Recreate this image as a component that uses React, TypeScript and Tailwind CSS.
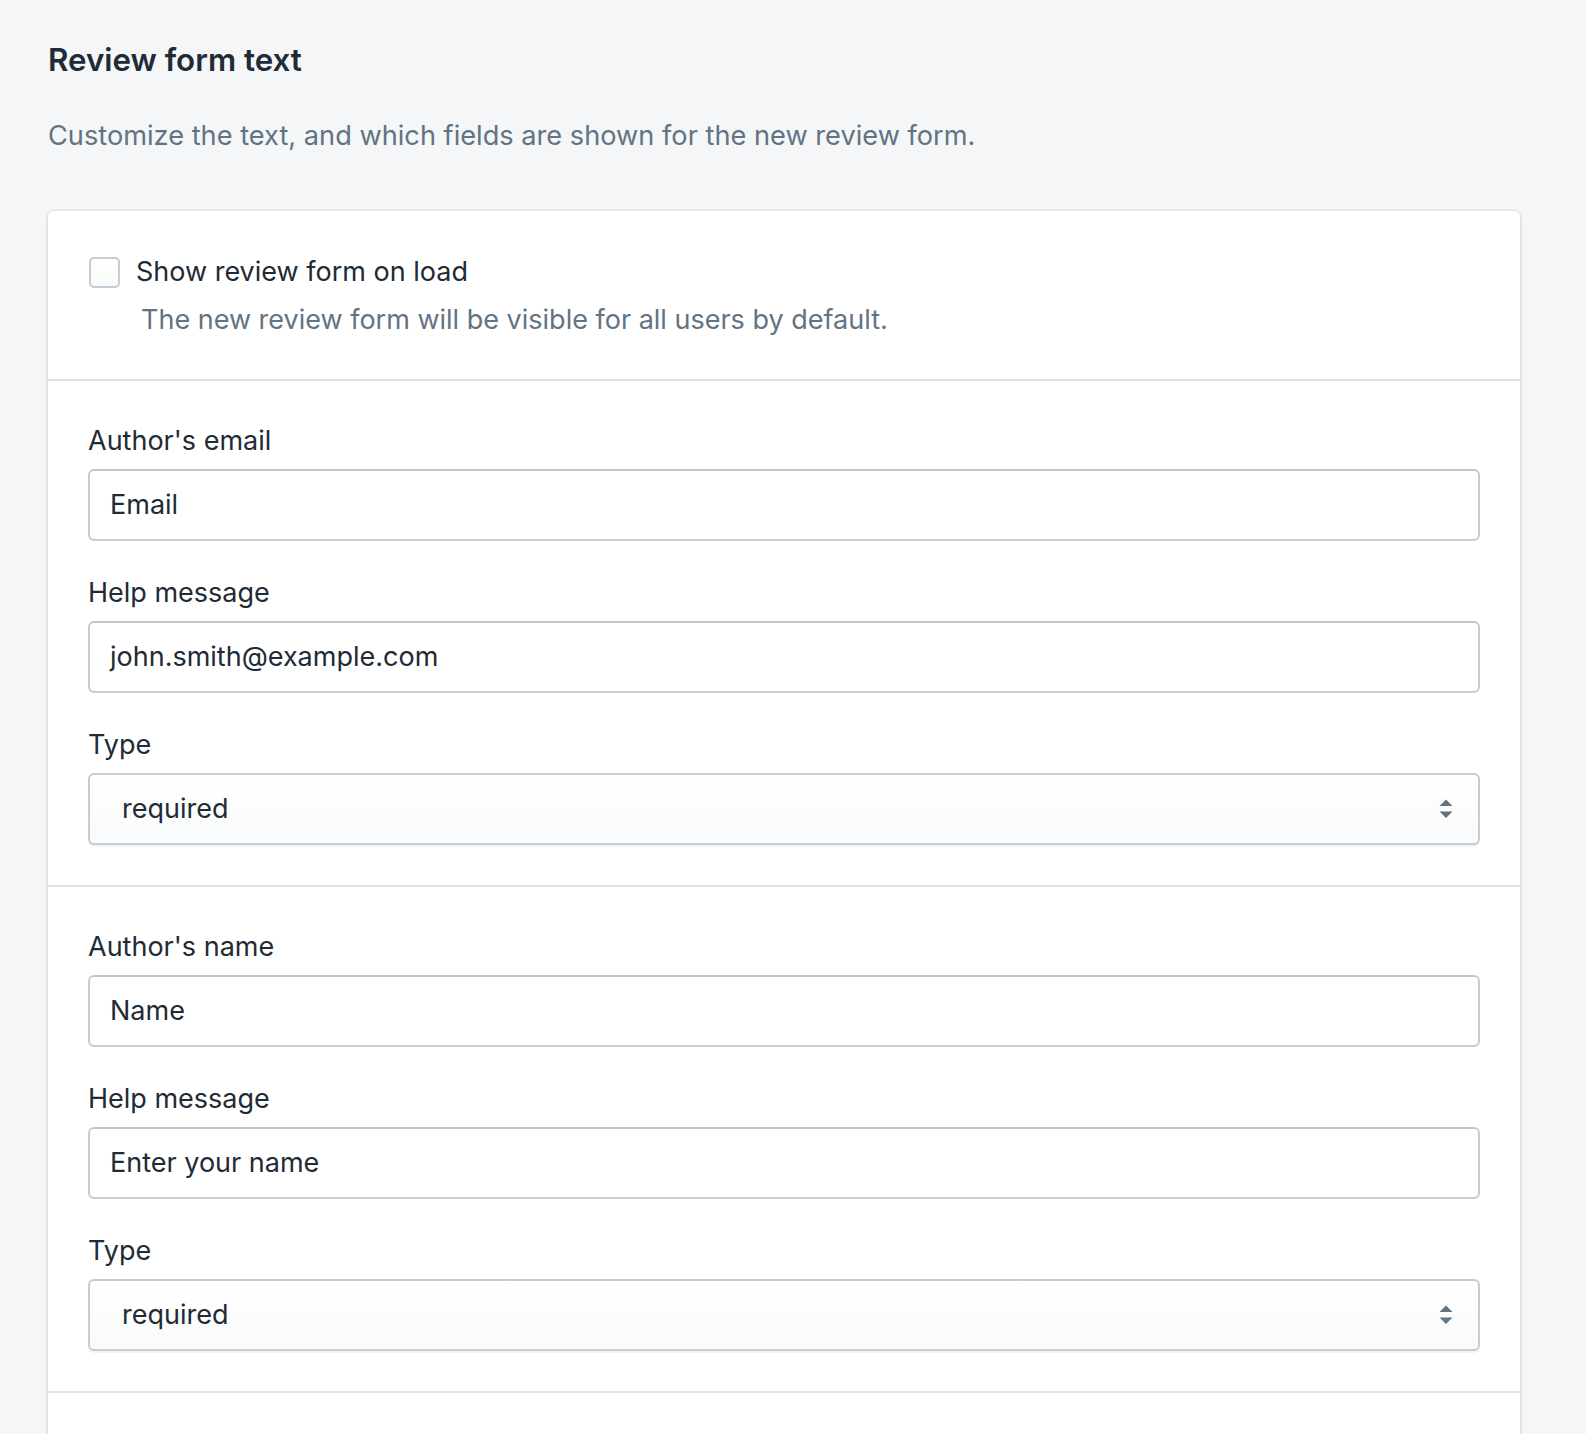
import React from 'react';

interface Field {
  label: string;
  value: string;
}

interface Section {
  id: string;
  fields: Field[];
  type: string;
}

const sections: Section[] = [
  {
    id: 'email',
    fields: [
      { label: "Author's email", value: 'Email' },
      { label: 'Help message', value: 'john.smith@example.com' },
    ],
    type: 'required',
  },
  {
    id: 'name',
    fields: [
      { label: "Author's name", value: 'Name' },
      { label: 'Help message', value: 'Enter your name' },
    ],
    type: 'required',
  },
];

const SelectArrows: React.FC = () => (
  <svg width="14" height="20" viewBox="0 0 14 20" className="text-[#637381]" fill="currentColor">
    <path d="M7 0.5L13.5 7H0.5z" />
    <path d="M0.5 12.5H13.5L7 19z" />
  </svg>
);

const TextInput: React.FC<Field> = ({ label, value }) => (
  <div>
    <label className="block text-[27px] leading-[40px] text-[#212b36]">{label}</label>
    <div className="mt-2 h-[72px] rounded-[6px] border-2 border-[#c4cdd5] border-t-[#bfc6cd] bg-white px-5 flex items-center text-[27px] text-[#212b36]">
      {value}
    </div>
  </div>
);

const TypeSelect: React.FC<{ value: string }> = ({ value }) => (
  <div>
    <label className="block text-[27px] leading-[40px] text-[#212b36]">Type</label>
    <div className="mt-2 h-[72px] rounded-[6px] border-2 border-[#c4cdd5] bg-gradient-to-b from-white to-[#f9fafb] shadow-[0_2px_0_0_rgba(22,29,37,0.05)] pl-8 pr-[25px] flex items-center justify-between text-[27px] text-[#212b36]">
      <span>{value}</span>
      <SelectArrows />
    </div>
  </div>
);

export default function App() {
  return (
    <div className="h-screen overflow-hidden bg-[#f4f6f8] pl-12 pr-[66px] pt-10 font-['Inter','Noto_Sans',sans-serif] antialiased">
      <h2 className="text-[31.3px] leading-[40px] font-semibold text-[#212b36]">Review form text</h2>
      <p className="mt-9 text-[27.2px] leading-[40px] text-[#637381]">
        Customize the text, and which fields are shown for the new review form.
      </p>

      <div className="mt-[55px] rounded-[6px] bg-white shadow-[0_0_0_2px_rgba(63,63,68,0.05),0_2px_4px_0_rgba(63,63,68,0.12)]">
        <div className="px-10 pt-[41px] pb-[39px]">
          <div className="flex items-center h-10">
            <span className="ml-px w-[31px] h-[31px] rounded-[5px] border-2 border-[#c4cdd5] bg-gradient-to-b from-white to-[#f9fafb]" />
            <span className="ml-[16px] text-[27px] leading-[40px] text-[#212b36]">Show review form on load</span>
          </div>
          <p className="mt-2 pl-[53px] text-[27px] leading-[40px] text-[#637381]">
            The new review form will be visible for all users by default.
          </p>
        </div>

        {sections.map((section) => (
          <div key={section.id} className="border-t-2 border-[#dfe3e8] p-10 flex flex-col gap-8">
            {section.fields.map((field, i) => (
              <TextInput key={i} label={field.label} value={field.value} />
            ))}
            <TypeSelect value={section.type} />
          </div>
        ))}

        <div className="border-t-2 border-[#dfe3e8] h-24" />
      </div>
    </div>
  );
}
